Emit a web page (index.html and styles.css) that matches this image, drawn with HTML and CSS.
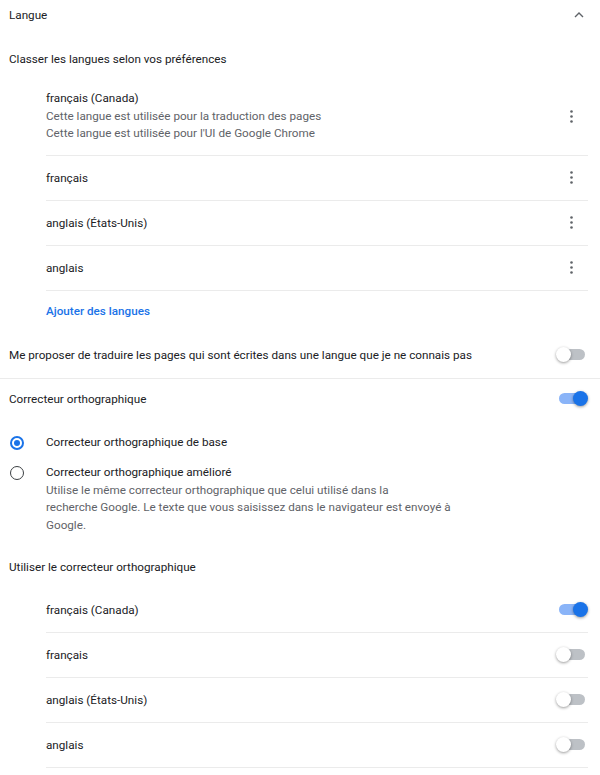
FILE: index.html
```html
<!DOCTYPE html>
<html lang="fr">
<head>
<meta charset="utf-8">
<title>Langue</title>
<link rel="stylesheet" href="styles.css">
</head>
<body>
<div class="page">
  <div class="row header">
    <span>Langue</span>
    <svg class="chevron" viewBox="0 0 10 6" width="10" height="6"><path d="M1 5 L5 1 L9 5" fill="none" stroke="#5f6368" stroke-width="1.4"/></svg>
  </div>
  <div class="row sub">Classer les langues selon vos préférences</div>

  <div class="list">
    <div class="item multi">
      <div class="lines">
        <div>français (Canada)</div>
        <div class="secondary">Cette langue est utilisée pour la traduction des pages</div>
        <div class="secondary">Cette langue est utilisée pour l'UI de Google Chrome</div>
      </div>
      <svg class="kebab" viewBox="0 0 3 13" width="3" height="13"><circle cx="1.5" cy="1.5" r="1.3"/><circle cx="1.5" cy="6.5" r="1.3"/><circle cx="1.5" cy="11.5" r="1.3"/></svg>
    </div>
    <div class="item">
      <span>français</span>
      <svg class="kebab" viewBox="0 0 3 13" width="3" height="13"><circle cx="1.5" cy="1.5" r="1.3"/><circle cx="1.5" cy="6.5" r="1.3"/><circle cx="1.5" cy="11.5" r="1.3"/></svg>
    </div>
    <div class="item">
      <span>anglais (États-Unis)</span>
      <svg class="kebab" viewBox="0 0 3 13" width="3" height="13"><circle cx="1.5" cy="1.5" r="1.3"/><circle cx="1.5" cy="6.5" r="1.3"/><circle cx="1.5" cy="11.5" r="1.3"/></svg>
    </div>
    <div class="item">
      <span>anglais</span>
      <svg class="kebab" viewBox="0 0 3 13" width="3" height="13"><circle cx="1.5" cy="1.5" r="1.3"/><circle cx="1.5" cy="6.5" r="1.3"/><circle cx="1.5" cy="11.5" r="1.3"/></svg>
    </div>
    <div class="add"><a class="link">Ajouter des langues</a></div>
  </div>

  <div class="row translate">
    <span>Me proposer de traduire les pages qui sont écrites dans une langue que je ne connais pas</span>
    <span class="toggle"><span class="track"></span><span class="knob"></span></span>
  </div>
  <div class="row spell">
    <span>Correcteur orthographique</span>
    <span class="toggle on"><span class="track"></span><span class="knob"></span></span>
  </div>

  <div class="radios">
    <div class="radio-row">
      <span class="radio checked"></span>
      <div class="lines"><div>Correcteur orthographique de base</div></div>
    </div>
    <div class="radio-row">
      <span class="radio"></span>
      <div class="lines">
        <div>Correcteur orthographique amélioré</div>
        <div class="secondary">Utilise le même correcteur orthographique que celui utilisé dans la<br>recherche Google. Le texte que vous saisissez dans le navigateur est envoyé à<br>Google.</div>
      </div>
    </div>
  </div>

  <div class="row use">Utiliser le correcteur orthographique</div>

  <div class="list">
    <div class="item">
      <span>français (Canada)</span>
      <span class="toggle on"><span class="track"></span><span class="knob"></span></span>
    </div>
    <div class="item">
      <span>français</span>
      <span class="toggle"><span class="track"></span><span class="knob"></span></span>
    </div>
    <div class="item">
      <span>anglais (États-Unis)</span>
      <span class="toggle"><span class="track"></span><span class="knob"></span></span>
    </div>
    <div class="item">
      <span>anglais</span>
      <span class="toggle"><span class="track"></span><span class="knob"></span></span>
    </div>
  </div>
</div>
</body>
</html>
```
FILE: styles.css
```css
html, body {
  margin: 0;
  padding: 0;
  background: #ffffff;
}

body {
  font-family: Roboto, "Liberation Sans", sans-serif;
  font-size: 11.7px;
  color: #202124;
}

.page {
  width: 600px;
}

.row {
  display: flex;
  align-items: center;
  justify-content: space-between;
  padding: 0 12px 0 9px;
  box-sizing: border-box;
}

.header { height: 30px; }
.chevron { margin-right: 4px; display: block; }

.sub { height: 57px; }

.list {
  margin: 0 12px 0 46px;
}

.item {
  display: flex;
  align-items: center;
  justify-content: space-between;
  height: 44px;
  border-bottom: 1px solid #ebebeb;
}

.item.multi {
  height: auto;
  padding: 3px 0 12px;
}

.lines { line-height: 17.5px; }

.secondary { color: #5f6368; }

.kebab {
  display: block;
  fill: #5f6368;
  margin-right: 15px;
}

.add {
  height: 41px;
  display: flex;
  align-items: center;
}

.link {
  color: #1a73e8;
  font-weight: 500;
}

.translate {
  height: 47px;
  border-bottom: 1px solid #ebebeb;
}

.spell { height: 40px; }

.toggle {
  position: relative;
  display: block;
  width: 32px;
  height: 15px;
  flex: none;
}

.track {
  position: absolute;
  left: 3px;
  top: 2px;
  width: 26px;
  height: 11px;
  border-radius: 6px;
  background: #bdc1c6;
}

.knob {
  position: absolute;
  left: 0;
  top: 0;
  width: 15px;
  height: 15px;
  border-radius: 50%;
  background: #ffffff;
  box-shadow: 0 1px 3px rgba(0, 0, 0, 0.4);
}

.toggle.on .track { background: #8ab4f8; }
.toggle.on .knob {
  left: 17px;
  background: #1a73e8;
}

.radios {
  padding: 15.5px 12px 12.5px 10px;
  display: flex;
  flex-direction: column;
  gap: 12.5px;
}

.radio-row {
  display: flex;
  align-items: flex-start;
  gap: 22px;
}

.radio {
  width: 14px;
  height: 14px;
  margin-top: 2px;
  box-sizing: border-box;
  border: 1.5px solid #3c4043;
  border-radius: 50%;
  flex: none;
  display: flex;
  align-items: center;
  justify-content: center;
}

.radio.checked {
  border: 2px solid #1a73e8;
}

.radio.checked::after {
  content: "";
  width: 6px;
  height: 6px;
  border-radius: 50%;
  background: #1a73e8;
}

.use { height: 41px; }
```
